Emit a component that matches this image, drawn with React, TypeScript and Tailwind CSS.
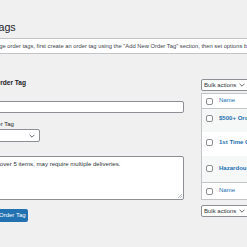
import React from "react";

function Check() {
  return <span className="block h-[7px] w-[7px] shrink-0 rounded-[2px] border border-[#8c8f94] bg-white" />;
}

function Chevron({ className = "" }: { className?: string }) {
  return (
    <svg width="6" height="4" viewBox="0 0 6 4" className={className}>
      <path d="M0.6 0.8 L3 3.2 L5.4 0.8" fill="none" stroke="#50575e" strokeWidth="0.9" />
    </svg>
  );
}

function BulkActions() {
  return (
    <div className="flex h-[12px] w-[60px] items-center gap-[3px] rounded-[2px] border border-[#8c8f94] bg-white pl-[2px] text-[6px] leading-none text-[#2c3338]">
      <span>Bulk actions</span>
      <Chevron />
    </div>
  );
}

export default function App() {
  return (
    <div className="h-[247px] w-[247px] overflow-hidden bg-[#f0f0f1] font-['Liberation_Sans',Arial,sans-serif] text-[#3c434a]">
      <h1 className="ml-[-37px] mt-[21px] whitespace-nowrap text-[10.7px] font-normal leading-[12px] text-[#1d2327]">Order Tags</h1>
      <div className="ml-[-40px] mt-[5px] flex h-[16px] w-[300px] items-center whitespace-nowrap border border-l-2 border-[#c3c4c7] border-l-[#72aee6] bg-white pl-[15px] text-[5.8px] text-[#3c434a]">
        To manage order tags, first create an order tag using the "Add New Order Tag" section, then set options below.
      </div>
      <div className="flex">
        <div className="w-[184px] shrink-0">
          <h2 className="ml-[-35px] mt-[24px] whitespace-nowrap text-[6.6px] font-bold leading-[10px] text-[#1d2327]">Add New Order Tag</h2>
          <div className="ml-[-40px] mt-[13px] h-[12px] w-[224px] rounded-[2px] border border-[#8c8f94] bg-white" />
          <div className="ml-[-32px] mt-[7px] whitespace-nowrap text-[6px] leading-[8px] text-[#1d2327]">Parent Order Tag</div>
          <div className="ml-[-40px] mt-[1px] flex h-[13px] w-[80px] items-center justify-end rounded-[2px] border border-[#8c8f94] bg-white pr-[4px]">
            <Chevron />
          </div>
          <div className="relative ml-[-40px] mt-[14px] h-[44px] w-[224px] whitespace-nowrap rounded-[2px] border border-[#8c8f94] bg-white pl-[6px] pt-[3px] text-[6.1px] leading-[8px] text-[#2c3338]">
            Orders with over 5 items, may require multiple deliveries.
            <svg width="4" height="4" viewBox="0 0 4 4" className="absolute bottom-[1px] right-[1px]">
              <path d="M4 0 L0 4 M4 2 L2 4" stroke="#8c8f94" strokeWidth="0.6" />
            </svg>
          </div>
          <div className="ml-[-31px] mt-[9px] flex h-[13px] w-[59px] items-center whitespace-nowrap rounded-[2px] bg-[#2271b1] pl-[4px] text-[6px] text-white">
            Add New Order Tag
          </div>
        </div>
        <div className="ml-[17px] w-[60px] shrink-0">
          <div className="mt-[25px]">
            <BulkActions />
          </div>
          <div className="mt-[2px] w-[60px] border border-[#c3c4c7] bg-white text-[6.05px]">
            <div className="flex h-[15px] items-center gap-[6px] border-b border-[#c3c4c7] pl-[4px] text-[#2271b1]">
              <Check />
              <span>Name</span>
            </div>
            <div className="flex h-[23px] items-start gap-[6px] whitespace-nowrap bg-[#f6f7f7] pl-[4px] pt-[6px] font-bold text-[#2271b1]">
              <Check />
              <span className="leading-[7px]">$500+ Orders</span>
            </div>
            <div className="flex h-[24px] items-start gap-[6px] whitespace-nowrap bg-white pl-[4px] pt-[7px] font-bold text-[#2271b1]">
              <Check />
              <span className="leading-[7px]">1st Time Orders</span>
            </div>
            <div className="flex h-[26px] items-start gap-[6px] whitespace-nowrap bg-[#f6f7f7] pl-[4px] pt-[9px] font-bold text-[#2271b1]">
              <Check />
              <span className="leading-[7px]">Hazardous</span>
            </div>
            <div className="flex h-[17px] items-center gap-[6px] border-t border-[#c3c4c7] pl-[4px] text-[#2271b1]">
              <Check />
              <span>Name</span>
            </div>
          </div>
          <div className="mt-[5px]">
            <BulkActions />
          </div>
        </div>
      </div>
    </div>
  );
}
